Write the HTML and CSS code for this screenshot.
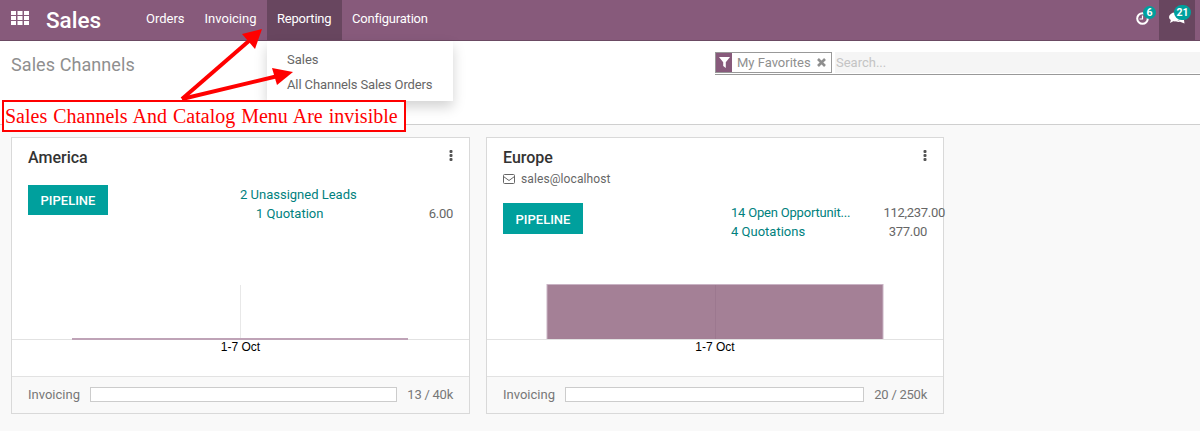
FILE: index.html
```html
<!DOCTYPE html>
<html lang="en">
<head>
    <meta charset="UTF-8">
    <meta name="viewport" content="width=device-width, initial-scale=1.0">
    <title>Sales Channels</title>
    <link rel="stylesheet" href="styles.css">
</head>
<body>

    <header class="navbar">
        <svg class="apps-icon" width="18" height="14" viewBox="0 0 18 14" fill="#fff">
            <rect x="0" y="0" width="5" height="4"/><rect x="6.5" y="0" width="5" height="4"/><rect x="13" y="0" width="5" height="4"/>
            <rect x="0" y="5" width="5" height="4"/><rect x="6.5" y="5" width="5" height="4"/><rect x="13" y="5" width="5" height="4"/>
            <rect x="0" y="10" width="5" height="4"/><rect x="6.5" y="10" width="5" height="4"/><rect x="13" y="10" width="5" height="4"/>
        </svg>
        <span class="brand">Sales</span>
        <nav class="nav-menu">
            <a class="nav-item">Orders</a>
            <a class="nav-item">Invoicing</a>
            <a class="nav-item tight active">Reporting</a>
            <a class="nav-item tight">Configuration</a>
        </nav>
        <div class="nav-right">
            <div class="nav-icon activity">
                <svg width="13" height="13" viewBox="0 0 13 13" fill="none" stroke="#fff">
                    <circle cx="6.5" cy="6.5" r="5.3" stroke-width="2"/>
                    <path d="M6.5 3.5V7H3.5" stroke-width="1.2"/>
                </svg>
                <span class="badge">6</span>
            </div>
            <div class="nav-icon messages">
                <svg width="16" height="13" viewBox="0 0 16 13" fill="#fff">
                    <ellipse cx="6" cy="5" rx="6" ry="4.4"/>
                    <path d="M2 7.5L1 11L5.5 8.5Z"/>
                    <path d="M12.5 3.5C15 4.5 16 6 15 8L15.5 11.5L11 9.8C9.5 10 8 9.8 6.8 9.2C10 9.2 13 7 12.5 3.5Z"/>
                </svg>
                <span class="badge">21</span>
            </div>
        </div>
    </header>

    <div class="control-panel">
        <h1 class="page-title">Sales Channels</h1>
        <div class="search-view">
            <div class="facet">
                <span class="facet-icon">
                    <svg width="11" height="11" viewBox="0 0 11 11" fill="#fff"><path d="M0 0H11L6.8 5.2V11L4.2 9V5.2Z"/></svg>
                </span>
                <span class="facet-label">My Favorites</span>
                <svg class="facet-remove" width="9" height="9" viewBox="0 0 9 9" fill="none" stroke="#8f8f8f" stroke-width="2.6"><path d="M1 1L8 8M8 1L1 8"/></svg>
            </div>
            <input class="search-input" type="text" placeholder="Search...">
        </div>
    </div>

    <main class="kanban">
        <section class="card">
            <div class="card-head">
                <h2 class="card-title">America</h2>
                <svg class="kebab" width="4" height="11" viewBox="0 0 4 11" fill="#555"><rect x="0.5" width="3" height="3" rx="1"/><rect x="0.5" y="4" width="3" height="3" rx="1"/><rect x="0.5" y="8" width="3" height="3" rx="1"/></svg>
            </div>
            <div class="card-body america-body">
                <a class="btn-pipeline">PIPELINE</a>
                <div class="stats america-stats">
                    <div class="stat-row"><a class="stat-link">2 Unassigned Leads</a></div>
                    <div class="stat-row indented"><a class="stat-link">1 Quotation</a><span class="stat-value">6.00</span></div>
                </div>
            </div>
            <svg class="chart" width="457" height="100" viewBox="0 0 457 100">
                <line x1="228.5" y1="9" x2="228.5" y2="63" stroke="#e8e8e8"/>
                <line x1="0" y1="63.5" x2="457" y2="63.5" stroke="#e2e2e2"/>
                <rect x="60" y="62" width="336" height="2" fill="#bfa3b7"/>
                <text class="chart-label" x="228.5" y="75" text-anchor="middle">1-7 Oct</text>
            </svg>
            <div class="card-foot">
                <span class="foot-label">Invoicing</span>
                <span class="progress"></span>
                <span class="foot-value">13 / 40k</span>
            </div>
        </section>

        <section class="card">
            <div class="card-head">
                <h2 class="card-title">Europe</h2>
                <svg class="kebab" width="4" height="11" viewBox="0 0 4 11" fill="#555"><rect x="0.5" width="3" height="3" rx="1"/><rect x="0.5" y="4" width="3" height="3" rx="1"/><rect x="0.5" y="8" width="3" height="3" rx="1"/></svg>
            </div>
            <div class="card-mail">
                <svg width="12" height="10" viewBox="0 0 12 10" fill="none" stroke="#666"><rect x="0.5" y="0.5" width="11" height="9" rx="1"/><path d="M0.5 2.5L6 6.5L11.5 2.5"/></svg>
                <span>sales@localhost</span>
            </div>
            <div class="card-body europe-body">
                <a class="btn-pipeline">PIPELINE</a>
                <div class="stats europe-stats">
                    <div class="stat-row"><a class="stat-link cut">14 Open Opportunit...</a><span class="stat-value overflow">112,237.00</span></div>
                    <div class="stat-row"><a class="stat-link">4 Quotations</a><span class="stat-value">377.00</span></div>
                </div>
            </div>
            <svg class="chart" width="456" height="100" viewBox="0 0 456 100">
                <rect x="60" y="8.5" width="336" height="55" fill="#a48096" stroke="#c9b3c4"/>
                <line x1="228.5" y1="9" x2="228.5" y2="63" stroke="#9c788f"/>
                <line x1="0" y1="63.5" x2="456" y2="63.5" stroke="#e2e2e2"/>
                <text class="chart-label" x="228" y="75" text-anchor="middle">1-7 Oct</text>
            </svg>
            <div class="card-foot">
                <span class="foot-label">Invoicing</span>
                <span class="progress"></span>
                <span class="foot-value">20 / 250k</span>
            </div>
        </section>
    </main>

    <!-- open menu and the red notes drawn on top of the page -->
    <ul class="dropdown">
        <li>Sales</li>
        <li class="dropdown-long">All Channels Sales Orders</li>
    </ul>

    <svg class="arrows" width="300" height="110" viewBox="0 0 300 110" fill="#f00" stroke="none">
        <path d="M182 99L250 40" stroke="#f00" stroke-width="4"/>
        <path d="M182 99L278 76" stroke="#f00" stroke-width="4"/>
        <polygon points="262,29 242,34 255,49"/>
        <polygon points="293,72 272,68 277,85"/>
    </svg>

    <div class="note">Sales Channels And Catalog Menu Are invisible</div>

</body>
</html>
```

FILE: styles.css
```css
body {
    font-family: 'Roboto', sans-serif;
    font-size: 13px;
    margin: 0;
    padding: 0;
    height: 431px;
    overflow: hidden;
    background-color: #f9f9f9;
    color: #666;
}

.navbar {
    height: 40px;
    background-color: #875a7b;
    border-bottom: 1px solid #6b4a63;
    display: flex;
    align-items: center;
    color: #fff;
}

.apps-icon {
    margin-left: 11px;
    margin-top: -4px;
}

.brand {
    font-size: 22.5px;
    font-weight: 500;
    margin-left: 17px;
    margin-top: -1px;
    flex: 0 0 56px;
}

.nav-menu {
    display: flex;
    margin-left: 34px;
    height: 40px;
}

.nav-item {
    padding: 0 10px;
    line-height: 38px;
    color: #fff;
}

.nav-item.tight {
    letter-spacing: -0.2px;
}

.nav-item.active {
    padding: 0 10.5px;
    background-color: #68465f;
}

.nav-right {
    margin-left: auto;
    display: flex;
    height: 40px;
    padding-right: 5px;
}

.nav-icon {
    position: relative;
    width: 36px;
    height: 40px;
    display: flex;
    align-items: center;
    justify-content: center;
}

.nav-icon svg {
    margin-top: -4px;
}

.activity svg {
    margin-left: 3px;
}

.messages {
    background-color: #68465f;
}

.badge {
    position: absolute;
    top: 5px;
    height: 15px;
    border-radius: 8px;
    background-color: #00a09d;
    color: #fff;
    font-size: 10.5px;
    font-weight: 700;
    line-height: 15px;
    text-align: center;
}

.activity .badge {
    left: 20px;
    top: 6px;
    width: 13px;
    height: 13px;
    line-height: 13px;
}

.messages .badge {
    left: 15px;
    width: 17px;
}

.control-panel {
    height: 83px;
    background-color: #fff;
    border-bottom: 1px solid #cfcfcf;
    display: flex;
    align-items: flex-start;
}

.page-title {
    margin: 13px 0 0 11px;
    font-size: 18px;
    font-weight: 400;
    line-height: 21px;
    letter-spacing: 0.08px;
    color: #8f8f8f;
}

.search-view {
    margin-left: auto;
    margin-top: 11px;
    width: 485px;
    height: 22px;
    border-bottom: 1px solid #999;
    display: flex;
    gap: 3px;
}

.facet {
    width: 117px;
    height: 21px;
    box-sizing: border-box;
    border: 1px solid #999;
    background-color: #fff;
    display: flex;
    align-items: center;
    flex: none;
}

.facet-icon {
    width: 16px;
    height: 19px;
    background-color: #875a7b;
    display: flex;
    align-items: center;
    justify-content: center;
    flex: none;
}

.facet-label {
    margin-left: 5px;
    color: #8f8f8f;
    white-space: nowrap;
}

.facet-remove {
    margin-left: 6px;
}

.search-input {
    flex: 1;
    height: 21px;
    border: none;
    padding: 0 1px;
    box-sizing: border-box;
    background-color: #f5f5f5;
    font-family: 'Roboto', sans-serif;
    font-size: 13px;
}

.search-input::placeholder {
    color: #c4c4c4;
}

.kanban {
    display: flex;
    gap: 16px;
    padding: 12px 0 0 11px;
}

.card {
    width: 459px;
    height: 277px;
    box-sizing: border-box;
    background-color: #fff;
    border: 1px solid #d9d9d9;
    display: flex;
    flex-direction: column;
}

.card + .card {
    width: 458px;
}

.card-head {
    display: flex;
    justify-content: space-between;
    padding: 10px 16px 0;
}

.card-title {
    margin: 0;
    font-size: 16px;
    font-weight: 500;
    line-height: 19px;
    color: #333;
}

.kebab {
    margin-top: 2px;
}

.card-mail {
    display: flex;
    align-items: center;
    gap: 6px;
    padding: 4px 16px 0;
    font-size: 12px;
    letter-spacing: 0.1px;
    line-height: 16px;
}

.card-body {
    display: flex;
    padding: 0 16px;
}

.america-body {
    padding-top: 18px;
}

.europe-body {
    padding-top: 16px;
}

.btn-pipeline {
    width: 80px;
    height: 30px;
    flex: none;
    background-color: #00a09d;
    color: #fff;
    font-weight: 500;
    line-height: 31px;
    text-align: center;
}

.europe-body .btn-pipeline {
    height: 31px;
    line-height: 33px;
}

.stats {
    margin-left: auto;
    line-height: 19px;
}

.america-stats {
    width: 213px;
}

.europe-stats {
    width: 196px;
    margin-top: 1px;
    line-height: 18.5px;
}

.stat-row {
    display: flex;
    white-space: nowrap;
}

.indented {
    padding-left: 16px;
}

.stat-link {
    color: #00817e;
}

.stat-link.cut {
    letter-spacing: -0.2px;
}

.stat-value {
    margin-left: auto;
    letter-spacing: -0.3px;
    color: #666;
}

.stat-value.overflow {
    margin-right: -18px;
}

.chart {
    margin-top: auto;
    display: block;
    flex: none;
}

.chart-label {
    font-family: 'Liberation Sans', sans-serif;
    font-size: 12px;
    fill: #000;
}

.card-foot {
    height: 37px;
    flex: none;
    box-sizing: border-box;
    border-top: 1px solid #e2e2e2;
    background-color: #f9f9f9;
    padding: 0 16px 2px;
    display: flex;
    align-items: center;
    color: #777;
}

.progress {
    flex: 1;
    height: 15px;
    box-sizing: border-box;
    margin: 0 10px;
    background-color: #fff;
    border: 1px solid #ccc;
}

.foot-value {
    letter-spacing: -0.25px;
}

.dropdown {
    position: absolute;
    left: 267px;
    top: 41px;
    width: 186px;
    height: 60px;
    box-sizing: border-box;
    margin: 0;
    padding: 6px 20px;
    list-style: none;
    background-color: #fff;
    box-shadow: 0 6px 12px rgba(0, 0, 0, 0.175);
    line-height: 25px;
    white-space: nowrap;
    color: #666;
}

.dropdown-long {
    letter-spacing: -0.12px;
}

.arrows {
    position: absolute;
    left: 0;
    top: 0;
}

.note {
    position: absolute;
    left: 2px;
    top: 100px;
    width: 404px;
    height: 32px;
    box-sizing: border-box;
    border: 2px solid #f00;
    background-color: #fff;
    padding-left: 1px;
    color: #f00;
    font-family: 'Liberation Serif', serif;
    font-size: 20px;
    word-spacing: 1px;
    line-height: 29px;
    white-space: nowrap;
}
```
